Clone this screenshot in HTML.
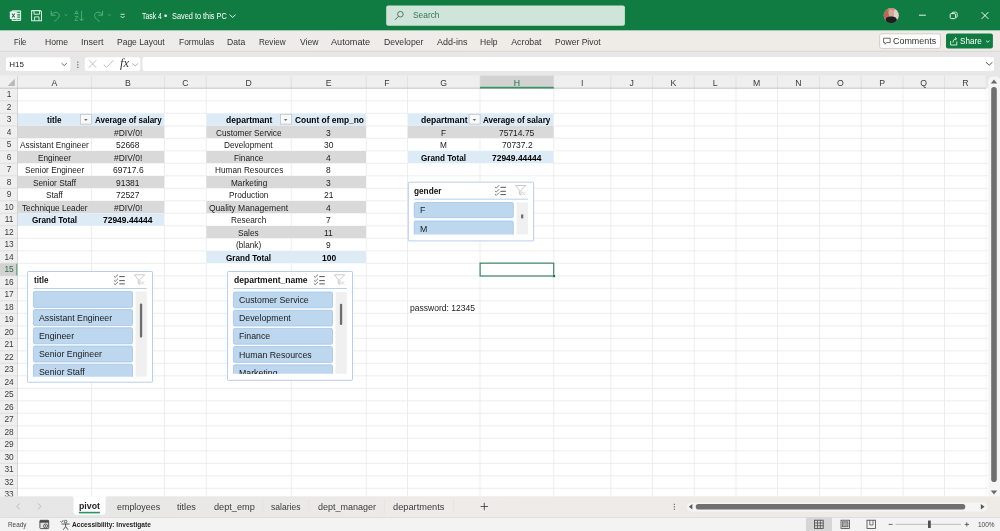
<!DOCTYPE html>
<html><head><meta charset="utf-8"><title>Excel</title><style>
html,body{margin:0;padding:0;}
body{width:1000px;height:531px;overflow:hidden;position:relative;background:#fff;font-family:"Liberation Sans", sans-serif;}
#w{position:absolute;left:0;top:0;width:1000px;height:531px;overflow:hidden;will-change:transform;}
.a{position:absolute;box-sizing:border-box;}
.t{position:absolute;white-space:nowrap;transform-origin:0 50%;}
svg{position:absolute;overflow:visible;}
</style></head>
<body>
<div id="w">
<svg class="a" style="left:0;top:0" width="1000" height="531" viewBox="0 0 1000 531" fill="none"><rect x="0.00" y="0.00" width="1000.00" height="30.60" fill="#107c41" /><defs><linearGradient id="mica1" x1="0" x2="1" y1="0" y2="0"><stop offset="0" stop-color="#ecebeb"/><stop offset="0.25" stop-color="#eeecea"/><stop offset="0.5" stop-color="#efece8"/><stop offset="1" stop-color="#efece8"/></linearGradient><linearGradient id="mica2" x1="0" x2="1" y1="0" y2="0"><stop offset="0" stop-color="#e6e6e6"/><stop offset="0.2" stop-color="#e9e8e7"/><stop offset="0.45" stop-color="#eeebe8"/><stop offset="1" stop-color="#eeeae6"/></linearGradient></defs><rect x="0.00" y="30.60" width="1000.00" height="20.60" fill="url(#mica1)" /><rect x="0.00" y="51.20" width="1000.00" height="25.00" fill="#e7e7e7" /><rect x="0.00" y="50.80" width="1000.00" height="0.90" fill="#d6d3d0" /><rect x="386.20" y="5.40" width="238.70" height="20.30" rx="2" fill="#cfe5d9" /><rect x="879.70" y="33.80" width="60.80" height="14.60" rx="2" fill="#ffffff" stroke="#c4c4c4" stroke-width="0.8" /><rect x="946.00" y="33.60" width="46.90" height="15.00" rx="2" fill="#107c41" /><rect x="6.00" y="57.20" width="64.40" height="13.80" rx="2" fill="#ffffff" /><rect x="84.80" y="57.20" width="55.40" height="13.80" rx="2" fill="#ffffff" /><rect x="142.60" y="57.00" width="851.40" height="14.00" rx="2" fill="#ffffff" /><rect x="0.00" y="75.60" width="986.30" height="12.70" fill="#efefef" /><rect x="0.00" y="75.60" width="17.50" height="420.70" fill="#efefef" /><rect x="17.50" y="88.30" width="968.80" height="408.00" fill="#ffffff" /><rect x="480.00" y="75.60" width="73.75" height="12.70" fill="#d1d2d1" /><rect x="0.00" y="263.30" width="17.50" height="12.50" fill="#d1d2d1" /><rect x="16.40" y="263.30" width="1.50" height="12.50" fill="#3c9265" /><rect x="17.50" y="113.30" width="147.00" height="12.50" fill="#ddebf7" /><rect x="17.50" y="125.80" width="147.00" height="12.50" fill="#d9d9d9" /><rect x="17.50" y="150.80" width="147.00" height="12.50" fill="#d9d9d9" /><rect x="17.50" y="175.80" width="147.00" height="12.50" fill="#d9d9d9" /><rect x="17.50" y="200.80" width="147.00" height="12.50" fill="#d9d9d9" /><rect x="17.50" y="213.30" width="147.00" height="12.50" fill="#ddebf7" /><rect x="206.25" y="113.30" width="160.00" height="12.50" fill="#ddebf7" /><rect x="206.25" y="125.80" width="160.00" height="12.50" fill="#d9d9d9" /><rect x="206.25" y="150.80" width="160.00" height="12.50" fill="#d9d9d9" /><rect x="206.25" y="175.80" width="160.00" height="12.50" fill="#d9d9d9" /><rect x="206.25" y="200.80" width="160.00" height="12.50" fill="#d9d9d9" /><rect x="206.25" y="225.80" width="160.00" height="12.50" fill="#d9d9d9" /><rect x="206.25" y="250.80" width="160.00" height="12.50" fill="#ddebf7" /><rect x="407.50" y="113.30" width="146.25" height="12.50" fill="#ddebf7" /><rect x="407.50" y="125.80" width="146.25" height="12.50" fill="#d9d9d9" /><rect x="407.50" y="150.80" width="146.25" height="12.50" fill="#ddebf7" /><line x1="17.50" y1="100.80" x2="986.30" y2="100.80" stroke="#e8e8e8" stroke-width="0.8"/><line x1="0" y1="100.80" x2="17.5" y2="100.80" stroke="#d9d9d9" stroke-width="0.7"/><line x1="164.50" y1="113.30" x2="206.25" y2="113.30" stroke="#e8e8e8" stroke-width="0.8"/><line x1="366.25" y1="113.30" x2="407.50" y2="113.30" stroke="#e8e8e8" stroke-width="0.8"/><line x1="553.75" y1="113.30" x2="986.30" y2="113.30" stroke="#e8e8e8" stroke-width="0.8"/><line x1="0" y1="113.30" x2="17.5" y2="113.30" stroke="#d9d9d9" stroke-width="0.7"/><line x1="164.50" y1="125.80" x2="206.25" y2="125.80" stroke="#e8e8e8" stroke-width="0.8"/><line x1="366.25" y1="125.80" x2="407.50" y2="125.80" stroke="#e8e8e8" stroke-width="0.8"/><line x1="553.75" y1="125.80" x2="986.30" y2="125.80" stroke="#e8e8e8" stroke-width="0.8"/><line x1="0" y1="125.80" x2="17.5" y2="125.80" stroke="#d9d9d9" stroke-width="0.7"/><line x1="164.50" y1="138.30" x2="206.25" y2="138.30" stroke="#e8e8e8" stroke-width="0.8"/><line x1="366.25" y1="138.30" x2="407.50" y2="138.30" stroke="#e8e8e8" stroke-width="0.8"/><line x1="553.75" y1="138.30" x2="986.30" y2="138.30" stroke="#e8e8e8" stroke-width="0.8"/><line x1="0" y1="138.30" x2="17.5" y2="138.30" stroke="#d9d9d9" stroke-width="0.7"/><line x1="164.50" y1="150.80" x2="206.25" y2="150.80" stroke="#e8e8e8" stroke-width="0.8"/><line x1="366.25" y1="150.80" x2="407.50" y2="150.80" stroke="#e8e8e8" stroke-width="0.8"/><line x1="553.75" y1="150.80" x2="986.30" y2="150.80" stroke="#e8e8e8" stroke-width="0.8"/><line x1="0" y1="150.80" x2="17.5" y2="150.80" stroke="#d9d9d9" stroke-width="0.7"/><line x1="164.50" y1="163.30" x2="206.25" y2="163.30" stroke="#e8e8e8" stroke-width="0.8"/><line x1="366.25" y1="163.30" x2="407.50" y2="163.30" stroke="#e8e8e8" stroke-width="0.8"/><line x1="553.75" y1="163.30" x2="986.30" y2="163.30" stroke="#e8e8e8" stroke-width="0.8"/><line x1="0" y1="163.30" x2="17.5" y2="163.30" stroke="#d9d9d9" stroke-width="0.7"/><line x1="164.50" y1="175.80" x2="206.25" y2="175.80" stroke="#e8e8e8" stroke-width="0.8"/><line x1="366.25" y1="175.80" x2="986.30" y2="175.80" stroke="#e8e8e8" stroke-width="0.8"/><line x1="0" y1="175.80" x2="17.5" y2="175.80" stroke="#d9d9d9" stroke-width="0.7"/><line x1="164.50" y1="188.30" x2="206.25" y2="188.30" stroke="#e8e8e8" stroke-width="0.8"/><line x1="366.25" y1="188.30" x2="986.30" y2="188.30" stroke="#e8e8e8" stroke-width="0.8"/><line x1="0" y1="188.30" x2="17.5" y2="188.30" stroke="#d9d9d9" stroke-width="0.7"/><line x1="164.50" y1="200.80" x2="206.25" y2="200.80" stroke="#e8e8e8" stroke-width="0.8"/><line x1="366.25" y1="200.80" x2="986.30" y2="200.80" stroke="#e8e8e8" stroke-width="0.8"/><line x1="0" y1="200.80" x2="17.5" y2="200.80" stroke="#d9d9d9" stroke-width="0.7"/><line x1="164.50" y1="213.30" x2="206.25" y2="213.30" stroke="#e8e8e8" stroke-width="0.8"/><line x1="366.25" y1="213.30" x2="986.30" y2="213.30" stroke="#e8e8e8" stroke-width="0.8"/><line x1="0" y1="213.30" x2="17.5" y2="213.30" stroke="#d9d9d9" stroke-width="0.7"/><line x1="164.50" y1="225.80" x2="206.25" y2="225.80" stroke="#e8e8e8" stroke-width="0.8"/><line x1="366.25" y1="225.80" x2="986.30" y2="225.80" stroke="#e8e8e8" stroke-width="0.8"/><line x1="0" y1="225.80" x2="17.5" y2="225.80" stroke="#d9d9d9" stroke-width="0.7"/><line x1="17.50" y1="238.30" x2="206.25" y2="238.30" stroke="#e8e8e8" stroke-width="0.8"/><line x1="366.25" y1="238.30" x2="986.30" y2="238.30" stroke="#e8e8e8" stroke-width="0.8"/><line x1="0" y1="238.30" x2="17.5" y2="238.30" stroke="#d9d9d9" stroke-width="0.7"/><line x1="17.50" y1="250.80" x2="206.25" y2="250.80" stroke="#e8e8e8" stroke-width="0.8"/><line x1="366.25" y1="250.80" x2="986.30" y2="250.80" stroke="#e8e8e8" stroke-width="0.8"/><line x1="0" y1="250.80" x2="17.5" y2="250.80" stroke="#d9d9d9" stroke-width="0.7"/><line x1="17.50" y1="263.30" x2="206.25" y2="263.30" stroke="#e8e8e8" stroke-width="0.8"/><line x1="366.25" y1="263.30" x2="986.30" y2="263.30" stroke="#e8e8e8" stroke-width="0.8"/><line x1="0" y1="263.30" x2="17.5" y2="263.30" stroke="#d9d9d9" stroke-width="0.7"/><line x1="17.50" y1="275.80" x2="986.30" y2="275.80" stroke="#e8e8e8" stroke-width="0.8"/><line x1="0" y1="275.80" x2="17.5" y2="275.80" stroke="#d9d9d9" stroke-width="0.7"/><line x1="17.50" y1="288.30" x2="986.30" y2="288.30" stroke="#e8e8e8" stroke-width="0.8"/><line x1="0" y1="288.30" x2="17.5" y2="288.30" stroke="#d9d9d9" stroke-width="0.7"/><line x1="17.50" y1="300.80" x2="986.30" y2="300.80" stroke="#e8e8e8" stroke-width="0.8"/><line x1="0" y1="300.80" x2="17.5" y2="300.80" stroke="#d9d9d9" stroke-width="0.7"/><line x1="17.50" y1="313.30" x2="986.30" y2="313.30" stroke="#e8e8e8" stroke-width="0.8"/><line x1="0" y1="313.30" x2="17.5" y2="313.30" stroke="#d9d9d9" stroke-width="0.7"/><line x1="17.50" y1="325.80" x2="986.30" y2="325.80" stroke="#e8e8e8" stroke-width="0.8"/><line x1="0" y1="325.80" x2="17.5" y2="325.80" stroke="#d9d9d9" stroke-width="0.7"/><line x1="17.50" y1="338.30" x2="986.30" y2="338.30" stroke="#e8e8e8" stroke-width="0.8"/><line x1="0" y1="338.30" x2="17.5" y2="338.30" stroke="#d9d9d9" stroke-width="0.7"/><line x1="17.50" y1="350.80" x2="986.30" y2="350.80" stroke="#e8e8e8" stroke-width="0.8"/><line x1="0" y1="350.80" x2="17.5" y2="350.80" stroke="#d9d9d9" stroke-width="0.7"/><line x1="17.50" y1="363.30" x2="986.30" y2="363.30" stroke="#e8e8e8" stroke-width="0.8"/><line x1="0" y1="363.30" x2="17.5" y2="363.30" stroke="#d9d9d9" stroke-width="0.7"/><line x1="17.50" y1="375.80" x2="986.30" y2="375.80" stroke="#e8e8e8" stroke-width="0.8"/><line x1="0" y1="375.80" x2="17.5" y2="375.80" stroke="#d9d9d9" stroke-width="0.7"/><line x1="17.50" y1="388.30" x2="986.30" y2="388.30" stroke="#e8e8e8" stroke-width="0.8"/><line x1="0" y1="388.30" x2="17.5" y2="388.30" stroke="#d9d9d9" stroke-width="0.7"/><line x1="17.50" y1="400.80" x2="986.30" y2="400.80" stroke="#e8e8e8" stroke-width="0.8"/><line x1="0" y1="400.80" x2="17.5" y2="400.80" stroke="#d9d9d9" stroke-width="0.7"/><line x1="17.50" y1="413.30" x2="986.30" y2="413.30" stroke="#e8e8e8" stroke-width="0.8"/><line x1="0" y1="413.30" x2="17.5" y2="413.30" stroke="#d9d9d9" stroke-width="0.7"/><line x1="17.50" y1="425.80" x2="986.30" y2="425.80" stroke="#e8e8e8" stroke-width="0.8"/><line x1="0" y1="425.80" x2="17.5" y2="425.80" stroke="#d9d9d9" stroke-width="0.7"/><line x1="17.50" y1="438.30" x2="986.30" y2="438.30" stroke="#e8e8e8" stroke-width="0.8"/><line x1="0" y1="438.30" x2="17.5" y2="438.30" stroke="#d9d9d9" stroke-width="0.7"/><line x1="17.50" y1="450.80" x2="986.30" y2="450.80" stroke="#e8e8e8" stroke-width="0.8"/><line x1="0" y1="450.80" x2="17.5" y2="450.80" stroke="#d9d9d9" stroke-width="0.7"/><line x1="17.50" y1="463.30" x2="986.30" y2="463.30" stroke="#e8e8e8" stroke-width="0.8"/><line x1="0" y1="463.30" x2="17.5" y2="463.30" stroke="#d9d9d9" stroke-width="0.7"/><line x1="17.50" y1="475.80" x2="986.30" y2="475.80" stroke="#e8e8e8" stroke-width="0.8"/><line x1="0" y1="475.80" x2="17.5" y2="475.80" stroke="#d9d9d9" stroke-width="0.7"/><line x1="17.50" y1="488.30" x2="986.30" y2="488.30" stroke="#e8e8e8" stroke-width="0.8"/><line x1="0" y1="488.30" x2="17.5" y2="488.30" stroke="#d9d9d9" stroke-width="0.7"/><line x1="91.50" y1="88.30" x2="91.50" y2="113.30" stroke="#e8e8e8" stroke-width="0.8"/><line x1="91.50" y1="138.30" x2="91.50" y2="150.80" stroke="#e8e8e8" stroke-width="0.8"/><line x1="91.50" y1="163.30" x2="91.50" y2="175.80" stroke="#e8e8e8" stroke-width="0.8"/><line x1="91.50" y1="188.30" x2="91.50" y2="200.80" stroke="#e8e8e8" stroke-width="0.8"/><line x1="91.50" y1="225.80" x2="91.50" y2="496.30" stroke="#e8e8e8" stroke-width="0.8"/><line x1="91.50" y1="76.5" x2="91.50" y2="88.3" stroke="#dcdcdc" stroke-width="0.8"/><line x1="164.50" y1="88.30" x2="164.50" y2="113.30" stroke="#e8e8e8" stroke-width="0.8"/><line x1="164.50" y1="138.30" x2="164.50" y2="150.80" stroke="#e8e8e8" stroke-width="0.8"/><line x1="164.50" y1="163.30" x2="164.50" y2="175.80" stroke="#e8e8e8" stroke-width="0.8"/><line x1="164.50" y1="188.30" x2="164.50" y2="200.80" stroke="#e8e8e8" stroke-width="0.8"/><line x1="164.50" y1="225.80" x2="164.50" y2="496.30" stroke="#e8e8e8" stroke-width="0.8"/><line x1="164.50" y1="76.5" x2="164.50" y2="88.3" stroke="#dcdcdc" stroke-width="0.8"/><line x1="206.25" y1="88.30" x2="206.25" y2="113.30" stroke="#e8e8e8" stroke-width="0.8"/><line x1="206.25" y1="138.30" x2="206.25" y2="150.80" stroke="#e8e8e8" stroke-width="0.8"/><line x1="206.25" y1="163.30" x2="206.25" y2="175.80" stroke="#e8e8e8" stroke-width="0.8"/><line x1="206.25" y1="188.30" x2="206.25" y2="200.80" stroke="#e8e8e8" stroke-width="0.8"/><line x1="206.25" y1="213.30" x2="206.25" y2="225.80" stroke="#e8e8e8" stroke-width="0.8"/><line x1="206.25" y1="238.30" x2="206.25" y2="250.80" stroke="#e8e8e8" stroke-width="0.8"/><line x1="206.25" y1="263.30" x2="206.25" y2="496.30" stroke="#e8e8e8" stroke-width="0.8"/><line x1="206.25" y1="76.5" x2="206.25" y2="88.3" stroke="#dcdcdc" stroke-width="0.8"/><line x1="291.25" y1="88.30" x2="291.25" y2="113.30" stroke="#e8e8e8" stroke-width="0.8"/><line x1="291.25" y1="138.30" x2="291.25" y2="150.80" stroke="#e8e8e8" stroke-width="0.8"/><line x1="291.25" y1="163.30" x2="291.25" y2="175.80" stroke="#e8e8e8" stroke-width="0.8"/><line x1="291.25" y1="188.30" x2="291.25" y2="200.80" stroke="#e8e8e8" stroke-width="0.8"/><line x1="291.25" y1="213.30" x2="291.25" y2="225.80" stroke="#e8e8e8" stroke-width="0.8"/><line x1="291.25" y1="238.30" x2="291.25" y2="250.80" stroke="#e8e8e8" stroke-width="0.8"/><line x1="291.25" y1="263.30" x2="291.25" y2="496.30" stroke="#e8e8e8" stroke-width="0.8"/><line x1="291.25" y1="76.5" x2="291.25" y2="88.3" stroke="#dcdcdc" stroke-width="0.8"/><line x1="366.25" y1="88.30" x2="366.25" y2="113.30" stroke="#e8e8e8" stroke-width="0.8"/><line x1="366.25" y1="138.30" x2="366.25" y2="150.80" stroke="#e8e8e8" stroke-width="0.8"/><line x1="366.25" y1="163.30" x2="366.25" y2="175.80" stroke="#e8e8e8" stroke-width="0.8"/><line x1="366.25" y1="188.30" x2="366.25" y2="200.80" stroke="#e8e8e8" stroke-width="0.8"/><line x1="366.25" y1="213.30" x2="366.25" y2="225.80" stroke="#e8e8e8" stroke-width="0.8"/><line x1="366.25" y1="238.30" x2="366.25" y2="250.80" stroke="#e8e8e8" stroke-width="0.8"/><line x1="366.25" y1="263.30" x2="366.25" y2="496.30" stroke="#e8e8e8" stroke-width="0.8"/><line x1="366.25" y1="76.5" x2="366.25" y2="88.3" stroke="#dcdcdc" stroke-width="0.8"/><line x1="407.50" y1="88.30" x2="407.50" y2="113.30" stroke="#e8e8e8" stroke-width="0.8"/><line x1="407.50" y1="138.30" x2="407.50" y2="150.80" stroke="#e8e8e8" stroke-width="0.8"/><line x1="407.50" y1="163.30" x2="407.50" y2="496.30" stroke="#e8e8e8" stroke-width="0.8"/><line x1="407.50" y1="76.5" x2="407.50" y2="88.3" stroke="#dcdcdc" stroke-width="0.8"/><line x1="480.00" y1="88.30" x2="480.00" y2="113.30" stroke="#e8e8e8" stroke-width="0.8"/><line x1="480.00" y1="138.30" x2="480.00" y2="150.80" stroke="#e8e8e8" stroke-width="0.8"/><line x1="480.00" y1="163.30" x2="480.00" y2="496.30" stroke="#e8e8e8" stroke-width="0.8"/><line x1="480.00" y1="76.5" x2="480.00" y2="88.3" stroke="#dcdcdc" stroke-width="0.8"/><line x1="553.75" y1="88.30" x2="553.75" y2="113.30" stroke="#e8e8e8" stroke-width="0.8"/><line x1="553.75" y1="138.30" x2="553.75" y2="150.80" stroke="#e8e8e8" stroke-width="0.8"/><line x1="553.75" y1="163.30" x2="553.75" y2="496.30" stroke="#e8e8e8" stroke-width="0.8"/><line x1="553.75" y1="76.5" x2="553.75" y2="88.3" stroke="#dcdcdc" stroke-width="0.8"/><line x1="610.80" y1="88.30" x2="610.80" y2="496.30" stroke="#e8e8e8" stroke-width="0.8"/><line x1="610.80" y1="76.5" x2="610.80" y2="88.3" stroke="#dcdcdc" stroke-width="0.8"/><line x1="652.50" y1="88.30" x2="652.50" y2="496.30" stroke="#e8e8e8" stroke-width="0.8"/><line x1="652.50" y1="76.5" x2="652.50" y2="88.3" stroke="#dcdcdc" stroke-width="0.8"/><line x1="694.25" y1="88.30" x2="694.25" y2="496.30" stroke="#e8e8e8" stroke-width="0.8"/><line x1="694.25" y1="76.5" x2="694.25" y2="88.3" stroke="#dcdcdc" stroke-width="0.8"/><line x1="736.00" y1="88.30" x2="736.00" y2="496.30" stroke="#e8e8e8" stroke-width="0.8"/><line x1="736.00" y1="76.5" x2="736.00" y2="88.3" stroke="#dcdcdc" stroke-width="0.8"/><line x1="777.50" y1="88.30" x2="777.50" y2="496.30" stroke="#e8e8e8" stroke-width="0.8"/><line x1="777.50" y1="76.5" x2="777.50" y2="88.3" stroke="#dcdcdc" stroke-width="0.8"/><line x1="819.50" y1="88.30" x2="819.50" y2="496.30" stroke="#e8e8e8" stroke-width="0.8"/><line x1="819.50" y1="76.5" x2="819.50" y2="88.3" stroke="#dcdcdc" stroke-width="0.8"/><line x1="861.25" y1="88.30" x2="861.25" y2="496.30" stroke="#e8e8e8" stroke-width="0.8"/><line x1="861.25" y1="76.5" x2="861.25" y2="88.3" stroke="#dcdcdc" stroke-width="0.8"/><line x1="903.00" y1="88.30" x2="903.00" y2="496.30" stroke="#e8e8e8" stroke-width="0.8"/><line x1="903.00" y1="76.5" x2="903.00" y2="88.3" stroke="#dcdcdc" stroke-width="0.8"/><line x1="944.50" y1="88.30" x2="944.50" y2="496.30" stroke="#e8e8e8" stroke-width="0.8"/><line x1="944.50" y1="76.5" x2="944.50" y2="88.3" stroke="#dcdcdc" stroke-width="0.8"/><line x1="986.25" y1="88.30" x2="986.25" y2="496.30" stroke="#e8e8e8" stroke-width="0.8"/><line x1="986.25" y1="76.5" x2="986.25" y2="88.3" stroke="#dcdcdc" stroke-width="0.8"/><line x1="17.5" y1="76" x2="17.5" y2="496.3" stroke="#cdcdcd" stroke-width="0.8"/><line x1="0" y1="88.2" x2="986.3" y2="88.2" stroke="#bfbfbf" stroke-width="0.9"/><path d="M14.8 78.8 L14.8 86 L7.6 86 Z" fill="#b8b8b8"/><rect x="480.00" y="86.80" width="73.75" height="1.70" fill="#3c9265" /></svg>
<span class="t" style="left:6.69px;top:90.27px;line-height:9.96px;font-size:8.3px;font-weight:400;color:#3a3a3a;">1</span>
<span class="t" style="left:6.69px;top:102.77px;line-height:9.96px;font-size:8.3px;font-weight:400;color:#3a3a3a;">2</span>
<span class="t" style="left:6.69px;top:115.27px;line-height:9.96px;font-size:8.3px;font-weight:400;color:#3a3a3a;">3</span>
<span class="t" style="left:6.69px;top:127.77px;line-height:9.96px;font-size:8.3px;font-weight:400;color:#3a3a3a;">4</span>
<span class="t" style="left:6.69px;top:140.27px;line-height:9.96px;font-size:8.3px;font-weight:400;color:#3a3a3a;">5</span>
<span class="t" style="left:6.69px;top:152.77px;line-height:9.96px;font-size:8.3px;font-weight:400;color:#3a3a3a;">6</span>
<span class="t" style="left:6.69px;top:165.27px;line-height:9.96px;font-size:8.3px;font-weight:400;color:#3a3a3a;">7</span>
<span class="t" style="left:6.69px;top:177.77px;line-height:9.96px;font-size:8.3px;font-weight:400;color:#3a3a3a;">8</span>
<span class="t" style="left:6.69px;top:190.27px;line-height:9.96px;font-size:8.3px;font-weight:400;color:#3a3a3a;">9</span>
<span class="t" style="left:4.38px;top:202.77px;line-height:9.96px;font-size:8.3px;font-weight:400;color:#3a3a3a;">10</span>
<span class="t" style="left:4.69px;top:215.27px;line-height:9.96px;font-size:8.3px;font-weight:400;color:#3a3a3a;">11</span>
<span class="t" style="left:4.38px;top:227.77px;line-height:9.96px;font-size:8.3px;font-weight:400;color:#3a3a3a;">12</span>
<span class="t" style="left:4.38px;top:240.27px;line-height:9.96px;font-size:8.3px;font-weight:400;color:#3a3a3a;">13</span>
<span class="t" style="left:4.38px;top:252.77px;line-height:9.96px;font-size:8.3px;font-weight:400;color:#3a3a3a;">14</span>
<span class="t" style="left:4.38px;top:265.27px;line-height:9.96px;font-size:8.3px;font-weight:400;color:#2c6e4b;">15</span>
<span class="t" style="left:4.38px;top:277.77px;line-height:9.96px;font-size:8.3px;font-weight:400;color:#3a3a3a;">16</span>
<span class="t" style="left:4.38px;top:290.27px;line-height:9.96px;font-size:8.3px;font-weight:400;color:#3a3a3a;">17</span>
<span class="t" style="left:4.38px;top:302.77px;line-height:9.96px;font-size:8.3px;font-weight:400;color:#3a3a3a;">18</span>
<span class="t" style="left:4.38px;top:315.27px;line-height:9.96px;font-size:8.3px;font-weight:400;color:#3a3a3a;">19</span>
<span class="t" style="left:4.38px;top:327.77px;line-height:9.96px;font-size:8.3px;font-weight:400;color:#3a3a3a;">20</span>
<span class="t" style="left:4.38px;top:340.27px;line-height:9.96px;font-size:8.3px;font-weight:400;color:#3a3a3a;">21</span>
<span class="t" style="left:4.38px;top:352.77px;line-height:9.96px;font-size:8.3px;font-weight:400;color:#3a3a3a;">22</span>
<span class="t" style="left:4.38px;top:365.27px;line-height:9.96px;font-size:8.3px;font-weight:400;color:#3a3a3a;">23</span>
<span class="t" style="left:4.38px;top:377.77px;line-height:9.96px;font-size:8.3px;font-weight:400;color:#3a3a3a;">24</span>
<span class="t" style="left:4.38px;top:390.27px;line-height:9.96px;font-size:8.3px;font-weight:400;color:#3a3a3a;">25</span>
<span class="t" style="left:4.38px;top:402.77px;line-height:9.96px;font-size:8.3px;font-weight:400;color:#3a3a3a;">26</span>
<span class="t" style="left:4.38px;top:415.27px;line-height:9.96px;font-size:8.3px;font-weight:400;color:#3a3a3a;">27</span>
<span class="t" style="left:4.38px;top:427.77px;line-height:9.96px;font-size:8.3px;font-weight:400;color:#3a3a3a;">28</span>
<span class="t" style="left:4.38px;top:440.27px;line-height:9.96px;font-size:8.3px;font-weight:400;color:#3a3a3a;">29</span>
<span class="t" style="left:4.38px;top:452.77px;line-height:9.96px;font-size:8.3px;font-weight:400;color:#3a3a3a;">30</span>
<span class="t" style="left:4.38px;top:465.27px;line-height:9.96px;font-size:8.3px;font-weight:400;color:#3a3a3a;">31</span>
<span class="t" style="left:4.38px;top:477.77px;line-height:9.96px;font-size:8.3px;font-weight:400;color:#3a3a3a;">32</span>
<span class="t" style="left:4.38px;top:490.27px;line-height:9.96px;font-size:8.3px;font-weight:400;color:#3a3a3a;">33</span>
<svg class="a" style="left:0;top:0" width="1000" height="531" viewBox="0 0 1000 531" fill="none"><rect x="80.60" y="114.30" width="11.00" height="9.80" fill="#f7f9fb" stroke="#bcbfc2" stroke-width="0.7" /><path d="M84.20 119.00h3.4l-1.7 2z" fill="#666"/><rect x="280.35" y="114.30" width="11.00" height="9.80" fill="#f7f9fb" stroke="#bcbfc2" stroke-width="0.7" /><path d="M283.95 119.00h3.4l-1.7 2z" fill="#666"/><rect x="469.10" y="114.30" width="11.00" height="9.80" fill="#f7f9fb" stroke="#bcbfc2" stroke-width="0.7" /><path d="M472.70 119.00h3.4l-1.7 2z" fill="#666"/><rect x="480.10" y="263.15" width="73.60" height="12.85" fill="none" stroke="#3a7f5e" stroke-width="1.15" /><rect x="552.40" y="274.50" width="2.80" height="2.80" fill="#1f6f49" stroke="#ffffff" stroke-width="0.4" /><rect x="11.6" y="10.2" width="9.5" height="10.8" rx="1.1" fill="#dcf0e4"/><rect x="17.3" y="11.7" width="2.7" height="1.3" fill="#107c41" opacity="0.85"/><rect x="17.3" y="14.1" width="2.7" height="1.5" fill="#107c41" opacity="0.85"/><rect x="17.3" y="16.5" width="2.7" height="1.3" fill="#107c41" opacity="0.85"/><rect x="17.3" y="19" width="2.7" height="0.8" fill="#107c41" opacity="0.85"/><rect x="12.9" y="19" width="3.6" height="0.8" fill="#107c41" opacity="0.85"/><rect x="13.2" y="11.7" width="3.3" height="0.6" fill="#107c41" opacity="0.85"/><rect x="9.8" y="11.4" width="6.3" height="7.7" rx="0.8" fill="#f6fbf8"/><path d="M11.9 13.5L14.9 17.5M14.9 13.5L11.9 17.5" stroke="#1b6e40" stroke-width="1.05"/><path d="M31.6 10.6H40.4L41.5 11.7V20.7H31.6Z" stroke="#d6f0e0" stroke-width="1.05" stroke-linejoin="round"/><path d="M34 10.6V14.2H39.6V10.6M34.6 20.7V16.9H39V20.7" stroke="#d6f0e0" stroke-width="1"/><path d="M51.2 11.2V15.2H55.2M51.4 15C53 12.2 56.5 11.4 58.4 13.4C60.4 15.6 59 18.4 54.6 21.2" stroke="#58b085" stroke-width="0.95" stroke-linecap="round"/><path d="M64.4 14.2L66 15.6L67.6 14.2" stroke="#58b085" stroke-width="0.7"/><path d="M74.6 14.6L76.4 10.8L78.2 14.6M75.2 13.5H77.6M74.9 16.4H78L74.9 20.4H78.2" stroke="#58b085" stroke-width="0.8" stroke-linejoin="round"/><path d="M81.6 10.8V20.6M79.6 18.6L81.6 20.8L83.6 18.6" stroke="#58b085" stroke-width="0.9"/><path d="M102.6 11.2V15.2H98.6M102.4 15C100.8 12.2 97.3 11.4 95.4 13.4C93.4 15.6 94.8 18.4 99.2 21.2" stroke="#58b085" stroke-width="0.95" stroke-linecap="round"/><path d="M107.8 14.2L109.4 15.6L111 14.2" stroke="#58b085" stroke-width="0.7"/><path d="M120.6 14.3H124.6" stroke="#ffffff" stroke-width="0.8"/><path d="M120.6 16L122.6 18L124.6 16" stroke="#ffffff" stroke-width="0.8"/><path d="M229.6 14.6L232.6 17.4L235.6 14.6" stroke="#ffffff" stroke-width="0.9"/><circle cx="400.4" cy="14.2" r="2.8" stroke="#3f6550" stroke-width="0.85"/><path d="M398.4 16.4L395 19.8" stroke="#3f6550" stroke-width="0.95"/><clipPath id="av"><circle cx="891.2" cy="15.6" r="7.5"/></clipPath><g clip-path="url(#av)"><rect x="883" y="7" width="17" height="17" fill="#c8a79b"/><rect x="883" y="7" width="6" height="12" fill="#b26a5c"/><rect x="894" y="7" width="6" height="12" fill="#ddd2cf"/><rect x="887.6" y="7.6" width="7" height="3" fill="#c58d78"/><ellipse cx="891.2" cy="12.8" rx="2.8" ry="3.3" fill="#d6ab93"/><path d="M885.6 24V20C885.6 17.4 888 16.4 891.2 16.4C894.4 16.4 896.8 17.4 896.8 20V24Z" fill="#1c1e1f"/></g><path d="M919 15.2H925.8" stroke="#ffffff" stroke-width="0.9"/><rect x="950.2" y="13.6" width="5.4" height="5" rx="1.2" stroke="#ffffff" stroke-width="0.9"/><path d="M951.8 13.4C951.8 12.6 952.4 12.2 953 12.2H955.6C956.6 12.2 957.2 12.8 957.2 13.8V16.4C957.2 17 956.8 17.4 956 17.4" stroke="#ffffff" stroke-width="0.8"/><path d="M981.6 12.1L988.4 18.9M988.4 12.1L981.6 18.9" stroke="#ffffff" stroke-width="0.95"/><path d="M883.6 38.2H890.2V42.6H886.6L885 44.2V42.6H883.6Z" stroke="#444" stroke-width="0.8" stroke-linejoin="round"/><path d="M950.6 41V45H956.8V41.4M953 42.6C953 40 954.4 38.8 956.2 38.8M955 37.4L956.6 38.8L955 40.2" stroke="#ffffff" stroke-width="0.8" stroke-linejoin="round"/><path d="M986 40.6L987.8 42.2L989.6 40.6" stroke="#ffffff" stroke-width="0.8"/><path d="M61.6 63.2L64.2 65.6L66.8 63.2" stroke="#444" stroke-width="0.8"/><rect x="77.2" y="61.6" width="1.2" height="1.2" fill="#666"/><rect x="77.2" y="64.2" width="1.2" height="1.2" fill="#666"/><rect x="77.2" y="66.8" width="1.2" height="1.2" fill="#666"/><path d="M88.9 60.3L96.2 67.6M96.2 60.3L88.9 67.6" stroke="#b0b0b0" stroke-width="0.8"/><path d="M103.8 64.8L106.6 67.4L113.6 60.2" stroke="#b0b0b0" stroke-width="0.8"/><path d="M132.2 63.4L135.2 66L138.2 63.4" stroke="#a0a0a0" stroke-width="0.8"/><path d="M986 62.2L989.2 65.2L992.4 62.2" stroke="#444" stroke-width="0.9"/><rect x="27.50" y="271.50" width="125.00" height="110.70" rx="0.8" fill="#ffffff" stroke="#b0cae6" stroke-width="0.9" /><rect x="33.40" y="288.00" width="113.50" height="0.90" fill="#b0cae6" /><rect x="33.40" y="291.40" width="99.10" height="16.00" rx="1.5" fill="#bdd7ee" stroke="#9dbfe2" stroke-width="0.7" /><rect x="33.40" y="309.60" width="99.10" height="16.00" rx="1.5" fill="#bdd7ee" stroke="#9dbfe2" stroke-width="0.7" /></svg>
<div class="a" style="left:39.20px;top:309.60px;width:93.10px;height:16.00px;overflow:hidden;"><span class="t" style="left:0;top:3.14px;font-size:9.1px;line-height:10.92px;color:#1a1a1a;transform:scaleX(0.965);">Assistant Engineer</span></div>
<svg class="a" style="left:0;top:0" width="1000" height="531" viewBox="0 0 1000 531" fill="none"><rect x="33.40" y="327.80" width="99.10" height="16.00" rx="1.5" fill="#bdd7ee" stroke="#9dbfe2" stroke-width="0.7" /></svg>
<div class="a" style="left:39.20px;top:327.80px;width:93.10px;height:16.00px;overflow:hidden;"><span class="t" style="left:0;top:3.14px;font-size:9.1px;line-height:10.92px;color:#1a1a1a;transform:scaleX(0.965);">Engineer</span></div>
<svg class="a" style="left:0;top:0" width="1000" height="531" viewBox="0 0 1000 531" fill="none"><rect x="33.40" y="346.00" width="99.10" height="16.00" rx="1.5" fill="#bdd7ee" stroke="#9dbfe2" stroke-width="0.7" /></svg>
<div class="a" style="left:39.20px;top:346.00px;width:93.10px;height:16.00px;overflow:hidden;"><span class="t" style="left:0;top:3.14px;font-size:9.1px;line-height:10.92px;color:#1a1a1a;transform:scaleX(0.965);">Senior Engineer</span></div>
<svg class="a" style="left:0;top:0" width="1000" height="531" viewBox="0 0 1000 531" fill="none"><path d="M33.40 376.80V365.70Q33.40 364.20 34.90 364.20H131.00Q132.50 364.20 132.50 365.70V376.80" fill="#bdd7ee" stroke="#9dbfe2" stroke-width="0.7"/></svg>
<div class="a" style="left:39.20px;top:364.20px;width:93.10px;height:12.60px;overflow:hidden;"><span class="t" style="left:0;top:3.14px;font-size:9.1px;line-height:10.92px;color:#1a1a1a;transform:scaleX(0.965);">Senior Staff</span></div>
<svg class="a" style="left:0;top:0" width="1000" height="531" viewBox="0 0 1000 531" fill="none"><rect x="135.50" y="291.40" width="11.30" height="85.40" fill="#f0f0f0" /><rect x="139.90" y="303.50" width="2.30" height="34.00" rx="1" fill="#6e6e6e" /><path d="M113.90 276.20L115.20 277.40L118.10 274.50" stroke="#444" stroke-width="0.7"/><path d="M119.30 276.60H124.80" stroke="#444" stroke-width="0.9"/><path d="M113.90 280.20L115.20 281.40L118.10 278.50" stroke="#444" stroke-width="0.7"/><path d="M119.30 280.60H124.80" stroke="#444" stroke-width="0.9"/><path d="M113.90 283.50L115.20 284.70L118.10 281.80" stroke="#444" stroke-width="0.7"/><path d="M119.30 283.90H124.80" stroke="#444" stroke-width="0.9"/><path d="M134.30 274.80H144.70L139.90 279.60V284.40L138.30 283.40V279.60Z" stroke="#bcbcbc" stroke-width="0.8" stroke-linejoin="round"/><path d="M140.90 281.20L144.30 284.60M144.30 281.20L140.90 284.60" stroke="#c8c8c8" stroke-width="0.7"/><rect x="227.50" y="271.50" width="125.00" height="108.80" rx="0.8" fill="#ffffff" stroke="#b0cae6" stroke-width="0.9" /><rect x="233.40" y="288.00" width="113.50" height="0.90" fill="#b0cae6" /><rect x="233.40" y="292.00" width="99.10" height="15.80" rx="1.5" fill="#bdd7ee" stroke="#9dbfe2" stroke-width="0.7" /></svg>
<div class="a" style="left:239.20px;top:292.00px;width:93.10px;height:15.80px;overflow:hidden;"><span class="t" style="left:0;top:3.04px;font-size:9.1px;line-height:10.92px;color:#1a1a1a;transform:scaleX(0.965);">Customer Service</span></div>
<svg class="a" style="left:0;top:0" width="1000" height="531" viewBox="0 0 1000 531" fill="none"><rect x="233.40" y="310.20" width="99.10" height="15.80" rx="1.5" fill="#bdd7ee" stroke="#9dbfe2" stroke-width="0.7" /></svg>
<div class="a" style="left:239.20px;top:310.20px;width:93.10px;height:15.80px;overflow:hidden;"><span class="t" style="left:0;top:3.04px;font-size:9.1px;line-height:10.92px;color:#1a1a1a;transform:scaleX(0.965);">Development</span></div>
<svg class="a" style="left:0;top:0" width="1000" height="531" viewBox="0 0 1000 531" fill="none"><rect x="233.40" y="328.40" width="99.10" height="15.80" rx="1.5" fill="#bdd7ee" stroke="#9dbfe2" stroke-width="0.7" /></svg>
<div class="a" style="left:239.20px;top:328.40px;width:93.10px;height:15.80px;overflow:hidden;"><span class="t" style="left:0;top:3.04px;font-size:9.1px;line-height:10.92px;color:#1a1a1a;transform:scaleX(0.965);">Finance</span></div>
<svg class="a" style="left:0;top:0" width="1000" height="531" viewBox="0 0 1000 531" fill="none"><rect x="233.40" y="346.60" width="99.10" height="15.80" rx="1.5" fill="#bdd7ee" stroke="#9dbfe2" stroke-width="0.7" /></svg>
<div class="a" style="left:239.20px;top:346.60px;width:93.10px;height:15.80px;overflow:hidden;"><span class="t" style="left:0;top:3.04px;font-size:9.1px;line-height:10.92px;color:#1a1a1a;transform:scaleX(0.965);">Human Resources</span></div>
<svg class="a" style="left:0;top:0" width="1000" height="531" viewBox="0 0 1000 531" fill="none"><path d="M233.40 373.70V366.30Q233.40 364.80 234.90 364.80H331.00Q332.50 364.80 332.50 366.30V373.70" fill="#bdd7ee" stroke="#9dbfe2" stroke-width="0.7"/></svg>
<div class="a" style="left:239.20px;top:364.80px;width:93.10px;height:8.90px;overflow:hidden;"><span class="t" style="left:0;top:3.04px;font-size:9.1px;line-height:10.92px;color:#1a1a1a;transform:scaleX(0.965);">Marketing</span></div>
<svg class="a" style="left:0;top:0" width="1000" height="531" viewBox="0 0 1000 531" fill="none"><rect x="335.50" y="292.00" width="11.30" height="81.70" fill="#f0f0f0" /><rect x="339.90" y="303.80" width="2.30" height="21.20" rx="1" fill="#6e6e6e" /><path d="M313.90 276.20L315.20 277.40L318.10 274.50" stroke="#444" stroke-width="0.7"/><path d="M319.30 276.60H324.80" stroke="#444" stroke-width="0.9"/><path d="M313.90 280.20L315.20 281.40L318.10 278.50" stroke="#444" stroke-width="0.7"/><path d="M319.30 280.60H324.80" stroke="#444" stroke-width="0.9"/><path d="M313.90 283.50L315.20 284.70L318.10 281.80" stroke="#444" stroke-width="0.7"/><path d="M319.30 283.90H324.80" stroke="#444" stroke-width="0.9"/><path d="M334.30 274.80H344.70L339.90 279.60V284.40L338.30 283.40V279.60Z" stroke="#bcbcbc" stroke-width="0.8" stroke-linejoin="round"/><path d="M340.90 281.20L344.30 284.60M344.30 281.20L340.90 284.60" stroke="#c8c8c8" stroke-width="0.7"/><rect x="408.30" y="182.20" width="125.30" height="58.70" rx="0.8" fill="#ffffff" stroke="#b0cae6" stroke-width="0.9" /><rect x="414.20" y="198.70" width="113.80" height="0.90" fill="#b0cae6" /><rect x="414.20" y="202.50" width="99.10" height="15.20" rx="1.5" fill="#bdd7ee" stroke="#9dbfe2" stroke-width="0.7" /></svg>
<div class="a" style="left:420.00px;top:202.50px;width:93.10px;height:15.20px;overflow:hidden;"><span class="t" style="left:0;top:2.74px;font-size:9.1px;line-height:10.92px;color:#1a1a1a;transform:scaleX(0.965);">F</span></div>
<svg class="a" style="left:0;top:0" width="1000" height="531" viewBox="0 0 1000 531" fill="none"><path d="M414.20 234.50V222.40Q414.20 220.90 415.70 220.90H511.80Q513.30 220.90 513.30 222.40V234.50" fill="#bdd7ee" stroke="#9dbfe2" stroke-width="0.7"/></svg>
<div class="a" style="left:420.00px;top:220.90px;width:93.10px;height:13.60px;overflow:hidden;"><span class="t" style="left:0;top:2.74px;font-size:9.1px;line-height:10.92px;color:#1a1a1a;transform:scaleX(0.965);">M</span></div>
<svg class="a" style="left:0;top:0" width="1000" height="531" viewBox="0 0 1000 531" fill="none"><rect x="516.60" y="202.50" width="11.30" height="32.00" fill="#f0f0f0" /><rect x="521.00" y="214.20" width="2.30" height="4.30" rx="1" fill="#6e6e6e" /><path d="M495.00 186.90L496.30 188.10L499.20 185.20" stroke="#444" stroke-width="0.7"/><path d="M500.40 187.30H505.90" stroke="#444" stroke-width="0.9"/><path d="M495.00 190.90L496.30 192.10L499.20 189.20" stroke="#444" stroke-width="0.7"/><path d="M500.40 191.30H505.90" stroke="#444" stroke-width="0.9"/><path d="M495.00 194.20L496.30 195.40L499.20 192.50" stroke="#444" stroke-width="0.7"/><path d="M500.40 194.60H505.90" stroke="#444" stroke-width="0.9"/><path d="M515.40 185.50H525.80L521.00 190.30V195.10L519.40 194.10V190.30Z" stroke="#bcbcbc" stroke-width="0.8" stroke-linejoin="round"/><path d="M522.00 191.90L525.40 195.30M525.40 191.90L522.00 195.30" stroke="#c8c8c8" stroke-width="0.7"/><rect x="986.30" y="75.60" width="13.70" height="12.70" fill="#e7e7e7" /><rect x="986.30" y="88.30" width="13.70" height="408.00" fill="#ffffff" /><rect x="986.30" y="100.40" width="1.90" height="0.80" fill="#e8e8e8" /><rect x="986.30" y="112.90" width="1.90" height="0.80" fill="#e8e8e8" /><rect x="986.30" y="125.40" width="1.90" height="0.80" fill="#e8e8e8" /><rect x="986.30" y="137.90" width="1.90" height="0.80" fill="#e8e8e8" /><rect x="986.30" y="150.40" width="1.90" height="0.80" fill="#e8e8e8" /><rect x="986.30" y="162.90" width="1.90" height="0.80" fill="#e8e8e8" /><rect x="986.30" y="175.40" width="1.90" height="0.80" fill="#e8e8e8" /><rect x="986.30" y="187.90" width="1.90" height="0.80" fill="#e8e8e8" /><rect x="986.30" y="200.40" width="1.90" height="0.80" fill="#e8e8e8" /><rect x="986.30" y="212.90" width="1.90" height="0.80" fill="#e8e8e8" /><rect x="986.30" y="225.40" width="1.90" height="0.80" fill="#e8e8e8" /><rect x="986.30" y="237.90" width="1.90" height="0.80" fill="#e8e8e8" /><rect x="986.30" y="250.40" width="1.90" height="0.80" fill="#e8e8e8" /><rect x="986.30" y="262.90" width="1.90" height="0.80" fill="#e8e8e8" /><rect x="986.30" y="275.40" width="1.90" height="0.80" fill="#e8e8e8" /><rect x="986.30" y="287.90" width="1.90" height="0.80" fill="#e8e8e8" /><rect x="986.30" y="300.40" width="1.90" height="0.80" fill="#e8e8e8" /><rect x="986.30" y="312.90" width="1.90" height="0.80" fill="#e8e8e8" /><rect x="986.30" y="325.40" width="1.90" height="0.80" fill="#e8e8e8" /><rect x="986.30" y="337.90" width="1.90" height="0.80" fill="#e8e8e8" /><rect x="986.30" y="350.40" width="1.90" height="0.80" fill="#e8e8e8" /><rect x="986.30" y="362.90" width="1.90" height="0.80" fill="#e8e8e8" /><rect x="986.30" y="375.40" width="1.90" height="0.80" fill="#e8e8e8" /><rect x="986.30" y="387.90" width="1.90" height="0.80" fill="#e8e8e8" /><rect x="986.30" y="400.40" width="1.90" height="0.80" fill="#e8e8e8" /><rect x="986.30" y="412.90" width="1.90" height="0.80" fill="#e8e8e8" /><rect x="986.30" y="425.40" width="1.90" height="0.80" fill="#e8e8e8" /><rect x="986.30" y="437.90" width="1.90" height="0.80" fill="#e8e8e8" /><rect x="986.30" y="450.40" width="1.90" height="0.80" fill="#e8e8e8" /><rect x="986.30" y="462.90" width="1.90" height="0.80" fill="#e8e8e8" /><rect x="986.30" y="475.40" width="1.90" height="0.80" fill="#e8e8e8" /><rect x="986.30" y="487.90" width="1.90" height="0.80" fill="#e8e8e8" /><rect x="988.20" y="76.40" width="12.40" height="421.00" rx="5" fill="#f5f5f5" /><rect x="991.20" y="87.00" width="5.60" height="395.00" rx="2.8" fill="#6f6f6f" /><rect x="0.00" y="496.30" width="1000.00" height="21.00" fill="url(#mica2)" /><rect x="0.00" y="517.40" width="1000.00" height="14.00" fill="#f3f3f3" /><rect x="0.00" y="517.00" width="1000.00" height="0.80" fill="#d9d9d9" /><path d="M71.4 496.3Q73.6 496.3 73.6 498.6V512.4Q73.6 514.8 76 514.8H103.1Q105.5 514.8 105.5 512.4V498.6Q105.5 496.3 107.7 496.3Z" fill="#ffffff"/><rect x="78.90" y="511.80" width="21.00" height="1.60" fill="#2f9162" /><rect x="262.50" y="499.50" width="0.80" height="14.00" fill="#e4e1de" /><rect x="308.50" y="499.50" width="0.80" height="14.00" fill="#e4e1de" /><rect x="383.90" y="499.50" width="0.80" height="14.00" fill="#e4e1de" /><rect x="453.30" y="499.50" width="0.80" height="14.00" fill="#e4e1de" /><rect x="687.00" y="502.40" width="300.40" height="9.00" rx="4.5" fill="#f5f5f5" /><rect x="695.70" y="504.00" width="269.60" height="5.50" rx="2.75" fill="#6f6f6f" /><rect x="806.00" y="517.40" width="26.00" height="13.60" fill="#d6d6d6" /><path d="M990.8 83.4L994 79.6L997.2 83.4Z" fill="#6a6a6a"/><path d="M990.8 490.6L994 494.4L997.2 490.6Z" fill="#6a6a6a"/><path d="M692.4 504L688.8 506.8L692.4 509.6Z" fill="#5a5a5a"/><path d="M980.8 504L984.6 506.8L980.8 509.6Z" fill="#5a5a5a"/><rect x="673.8" y="503.8" width="1.1" height="1.1" fill="#555"/><rect x="673.8" y="506.2" width="1.1" height="1.1" fill="#555"/><rect x="673.8" y="508.6" width="1.1" height="1.1" fill="#555"/><path d="M19.6 503.4L16.8 506.4L19.6 509.4" stroke="#b0b0b0" stroke-width="0.8"/><path d="M38 503.4L40.8 506.4L38 509.4" stroke="#b0b0b0" stroke-width="0.8"/><path d="M480.6 506.5H488M484.3 502.8V510.2" stroke="#2a2a2a" stroke-width="0.75"/><rect x="39.9" y="520.3" width="8.8" height="8.3" rx="0.8" stroke="#444" stroke-width="0.9" fill="#e4e4e4"/><rect x="39.9" y="520.3" width="8.8" height="2.4" fill="#4a4a4a"/><circle cx="45.6" cy="526" r="2" stroke="#3a3a3a" stroke-width="0.8" fill="#f3f3f3"/><circle cx="45.6" cy="526" r="0.8" fill="#3a3a3a"/><circle cx="65.6" cy="521.6" r="1.3" stroke="#3a3a3a" stroke-width="0.8"/><path d="M61.6 524H69.6M65.6 524V526.6L63.2 529.8M65.6 526.6L68 529.8" stroke="#3a3a3a" stroke-width="0.85"/><path d="M60.4 521.2L61.6 522.4L63.4 520" stroke="#3a3a3a" stroke-width="0.7"/><rect x="814.6" y="520.2" width="8.6" height="8.2" stroke="#444" stroke-width="0.8"/><path d="M817.5 520.2V528.4M820.4 520.2V528.4M814.6 523H823.2M814.6 525.7H823.2" stroke="#444" stroke-width="0.7"/><rect x="841" y="520.2" width="8.6" height="8.2" stroke="#444" stroke-width="0.8"/><rect x="842.6" y="521.8" width="5.4" height="5" stroke="#555" stroke-width="0.7" fill="#a8a8a8"/><rect x="867" y="520.2" width="8.6" height="8.2" stroke="#444" stroke-width="0.8"/><path d="M869.8 520.2V525H873V520.2" stroke="#444" stroke-width="0.7"/><path d="M888.6 524.4H892.6" stroke="#444" stroke-width="0.8"/><path d="M895.5 524.4H961" stroke="#c6c6c6" stroke-width="1.1"/><rect x="928" y="520.6" width="2.8" height="7.4" rx="0.5" fill="#505050"/><path d="M964.6 524.4H969M966.8 522.2V526.6" stroke="#444" stroke-width="0.8"/></svg>
<span class="t" style="left:51.60px;top:78.08px;line-height:10.44px;font-size:8.7px;font-weight:400;color:#3a3a3a;">A</span>
<span class="t" style="left:125.10px;top:78.08px;line-height:10.44px;font-size:8.7px;font-weight:400;color:#3a3a3a;">B</span>
<span class="t" style="left:182.23px;top:78.08px;line-height:10.44px;font-size:8.7px;font-weight:400;color:#3a3a3a;">C</span>
<span class="t" style="left:245.61px;top:78.08px;line-height:10.44px;font-size:8.7px;font-weight:400;color:#3a3a3a;">D</span>
<span class="t" style="left:325.85px;top:78.08px;line-height:10.44px;font-size:8.7px;font-weight:400;color:#3a3a3a;">E</span>
<span class="t" style="left:384.22px;top:78.08px;line-height:10.44px;font-size:8.7px;font-weight:400;color:#3a3a3a;">F</span>
<span class="t" style="left:440.37px;top:78.08px;line-height:10.44px;font-size:8.7px;font-weight:400;color:#3a3a3a;">G</span>
<span class="t" style="left:513.73px;top:78.08px;line-height:10.44px;font-size:8.7px;font-weight:400;color:#1f7244;">H</span>
<span class="t" style="left:581.06px;top:78.08px;line-height:10.44px;font-size:8.7px;font-weight:400;color:#3a3a3a;">I</span>
<span class="t" style="left:629.48px;top:78.08px;line-height:10.44px;font-size:8.7px;font-weight:400;color:#3a3a3a;">J</span>
<span class="t" style="left:670.48px;top:78.08px;line-height:10.44px;font-size:8.7px;font-weight:400;color:#3a3a3a;">K</span>
<span class="t" style="left:712.70px;top:78.08px;line-height:10.44px;font-size:8.7px;font-weight:400;color:#3a3a3a;">L</span>
<span class="t" style="left:753.12px;top:78.08px;line-height:10.44px;font-size:8.7px;font-weight:400;color:#3a3a3a;">M</span>
<span class="t" style="left:795.36px;top:78.08px;line-height:10.44px;font-size:8.7px;font-weight:400;color:#3a3a3a;">N</span>
<span class="t" style="left:836.99px;top:78.08px;line-height:10.44px;font-size:8.7px;font-weight:400;color:#3a3a3a;">O</span>
<span class="t" style="left:879.23px;top:78.08px;line-height:10.44px;font-size:8.7px;font-weight:400;color:#3a3a3a;">P</span>
<span class="t" style="left:920.37px;top:78.08px;line-height:10.44px;font-size:8.7px;font-weight:400;color:#3a3a3a;">Q</span>
<span class="t" style="left:962.23px;top:78.08px;line-height:10.44px;font-size:8.7px;font-weight:400;color:#3a3a3a;">R</span>
<span class="t" style="left:47.28px;top:115.09px;line-height:10.32px;font-size:8.6px;font-weight:700;color:#000;transform:scaleX(0.9450);">title</span>
<span class="t" style="left:94.80px;top:115.09px;line-height:10.32px;font-size:8.6px;font-weight:700;color:#000;transform:scaleX(0.9349);">Average of salary</span>
<span class="t" style="left:113.88px;top:127.59px;line-height:10.32px;font-size:8.6px;font-weight:400;color:#1a1a1a;transform:scaleX(0.9850);">#DIV/0!</span>
<span class="t" style="left:20.11px;top:140.09px;line-height:10.32px;font-size:8.6px;font-weight:400;color:#1a1a1a;transform:scaleX(0.9600);">Assistant Engineer</span>
<span class="t" style="left:116.23px;top:140.09px;line-height:10.32px;font-size:8.6px;font-weight:400;color:#1a1a1a;transform:scaleX(0.9850);">52668</span>
<span class="t" style="left:37.98px;top:152.59px;line-height:10.32px;font-size:8.6px;font-weight:400;color:#1a1a1a;transform:scaleX(0.9600);">Engineer</span>
<span class="t" style="left:113.88px;top:152.59px;line-height:10.32px;font-size:8.6px;font-weight:400;color:#1a1a1a;transform:scaleX(0.9850);">#DIV/0!</span>
<span class="t" style="left:24.91px;top:165.09px;line-height:10.32px;font-size:8.6px;font-weight:400;color:#1a1a1a;transform:scaleX(0.9600);">Senior Engineer</span>
<span class="t" style="left:112.69px;top:165.09px;line-height:10.32px;font-size:8.6px;font-weight:400;color:#1a1a1a;transform:scaleX(0.9850);">69717.6</span>
<span class="t" style="left:33.02px;top:177.59px;line-height:10.32px;font-size:8.6px;font-weight:400;color:#1a1a1a;transform:scaleX(0.9600);">Senior Staff</span>
<span class="t" style="left:116.23px;top:177.59px;line-height:10.32px;font-size:8.6px;font-weight:400;color:#1a1a1a;transform:scaleX(0.9850);">91381</span>
<span class="t" style="left:46.09px;top:190.09px;line-height:10.32px;font-size:8.6px;font-weight:400;color:#1a1a1a;transform:scaleX(0.9600);">Staff</span>
<span class="t" style="left:116.23px;top:190.09px;line-height:10.32px;font-size:8.6px;font-weight:400;color:#1a1a1a;transform:scaleX(0.9850);">72527</span>
<span class="t" style="left:21.70px;top:202.59px;line-height:10.32px;font-size:8.6px;font-weight:400;color:#1a1a1a;transform:scaleX(0.9600);">Technique Leader</span>
<span class="t" style="left:113.88px;top:202.59px;line-height:10.32px;font-size:8.6px;font-weight:400;color:#1a1a1a;transform:scaleX(0.9850);">#DIV/0!</span>
<span class="t" style="left:32.01px;top:215.09px;line-height:10.32px;font-size:8.6px;font-weight:700;color:#000;transform:scaleX(0.9450);">Grand Total</span>
<span class="t" style="left:103.28px;top:215.09px;line-height:10.32px;font-size:8.6px;font-weight:700;color:#000;transform:scaleX(0.9850);">72949.44444</span>
<span class="t" style="left:225.90px;top:115.09px;line-height:10.32px;font-size:8.6px;font-weight:700;color:#000;transform:scaleX(0.9915);">departmant</span>
<span class="t" style="left:294.70px;top:115.09px;line-height:10.32px;font-size:8.6px;font-weight:700;color:#000;transform:scaleX(0.9751);">Count of emp_no</span>
<span class="t" style="left:215.97px;top:127.59px;line-height:10.32px;font-size:8.6px;font-weight:400;color:#1a1a1a;transform:scaleX(0.9600);">Customer Service</span>
<span class="t" style="left:326.40px;top:127.59px;line-height:10.32px;font-size:8.6px;font-weight:400;color:#1a1a1a;transform:scaleX(0.9850);">3</span>
<span class="t" style="left:224.44px;top:140.09px;line-height:10.32px;font-size:8.6px;font-weight:400;color:#1a1a1a;transform:scaleX(0.9600);">Development</span>
<span class="t" style="left:324.04px;top:140.09px;line-height:10.32px;font-size:8.6px;font-weight:400;color:#1a1a1a;transform:scaleX(0.9850);">30</span>
<span class="t" style="left:234.07px;top:152.59px;line-height:10.32px;font-size:8.6px;font-weight:400;color:#1a1a1a;transform:scaleX(0.9600);">Finance</span>
<span class="t" style="left:326.40px;top:152.59px;line-height:10.32px;font-size:8.6px;font-weight:400;color:#1a1a1a;transform:scaleX(0.9850);">4</span>
<span class="t" style="left:214.59px;top:165.09px;line-height:10.32px;font-size:8.6px;font-weight:400;color:#1a1a1a;transform:scaleX(0.9600);">Human Resources</span>
<span class="t" style="left:326.40px;top:165.09px;line-height:10.32px;font-size:8.6px;font-weight:400;color:#1a1a1a;transform:scaleX(0.9850);">8</span>
<span class="t" style="left:230.64px;top:177.59px;line-height:10.32px;font-size:8.6px;font-weight:400;color:#1a1a1a;transform:scaleX(0.9600);">Marketing</span>
<span class="t" style="left:326.40px;top:177.59px;line-height:10.32px;font-size:8.6px;font-weight:400;color:#1a1a1a;transform:scaleX(0.9850);">3</span>
<span class="t" style="left:229.03px;top:190.09px;line-height:10.32px;font-size:8.6px;font-weight:400;color:#1a1a1a;transform:scaleX(0.9600);">Production</span>
<span class="t" style="left:324.04px;top:190.09px;line-height:10.32px;font-size:8.6px;font-weight:400;color:#1a1a1a;transform:scaleX(0.9850);">21</span>
<span class="t" style="left:208.90px;top:202.59px;line-height:10.32px;font-size:8.6px;font-weight:400;color:#1a1a1a;">Quality Management</span>
<span class="t" style="left:326.40px;top:202.59px;line-height:10.32px;font-size:8.6px;font-weight:400;color:#1a1a1a;transform:scaleX(0.9850);">4</span>
<span class="t" style="left:231.09px;top:215.09px;line-height:10.32px;font-size:8.6px;font-weight:400;color:#1a1a1a;transform:scaleX(0.9600);">Research</span>
<span class="t" style="left:326.40px;top:215.09px;line-height:10.32px;font-size:8.6px;font-weight:400;color:#1a1a1a;transform:scaleX(0.9850);">7</span>
<span class="t" style="left:238.43px;top:227.59px;line-height:10.32px;font-size:8.6px;font-weight:400;color:#1a1a1a;transform:scaleX(0.9600);">Sales</span>
<span class="t" style="left:324.36px;top:227.59px;line-height:10.32px;font-size:8.6px;font-weight:400;color:#1a1a1a;transform:scaleX(0.9850);">11</span>
<span class="t" style="left:236.13px;top:240.09px;line-height:10.32px;font-size:8.6px;font-weight:400;color:#1a1a1a;transform:scaleX(0.9600);">(blank)</span>
<span class="t" style="left:326.40px;top:240.09px;line-height:10.32px;font-size:8.6px;font-weight:400;color:#1a1a1a;transform:scaleX(0.9850);">9</span>
<span class="t" style="left:226.26px;top:252.59px;line-height:10.32px;font-size:8.6px;font-weight:700;color:#000;transform:scaleX(0.9450);">Grand Total</span>
<span class="t" style="left:321.69px;top:252.59px;line-height:10.32px;font-size:8.6px;font-weight:700;color:#000;transform:scaleX(0.9850);">100</span>
<span class="t" style="left:420.50px;top:115.09px;line-height:10.32px;font-size:8.6px;font-weight:700;color:#000;transform:scaleX(0.9937);">departmant</span>
<span class="t" style="left:483.10px;top:115.09px;line-height:10.32px;font-size:8.6px;font-weight:700;color:#000;transform:scaleX(0.9433);">Average of salary</span>
<span class="t" style="left:441.23px;top:127.59px;line-height:10.32px;font-size:8.6px;font-weight:400;color:#1a1a1a;transform:scaleX(0.9600);">F</span>
<span class="t" style="left:499.22px;top:127.59px;line-height:10.32px;font-size:8.6px;font-weight:400;color:#1a1a1a;transform:scaleX(0.9850);">75714.75</span>
<span class="t" style="left:440.31px;top:140.09px;line-height:10.32px;font-size:8.6px;font-weight:400;color:#1a1a1a;transform:scaleX(0.9600);">M</span>
<span class="t" style="left:501.57px;top:140.09px;line-height:10.32px;font-size:8.6px;font-weight:400;color:#1a1a1a;transform:scaleX(0.9850);">70737.2</span>
<span class="t" style="left:421.26px;top:152.59px;line-height:10.32px;font-size:8.6px;font-weight:700;color:#000;transform:scaleX(0.9450);">Grand Total</span>
<span class="t" style="left:492.16px;top:152.59px;line-height:10.32px;font-size:8.6px;font-weight:700;color:#000;transform:scaleX(0.9850);">72949.44444</span>
<span class="t" style="left:409.50px;top:302.59px;line-height:10.32px;font-size:8.6px;font-weight:400;color:#1a1a1a;transform:scaleX(0.9931);">password: 12345</span>
<span class="t" style="left:13.80px;top:36.72px;line-height:10.56px;font-size:8.8px;font-weight:400;color:#333333;transform:scaleX(0.8740);">File</span>
<span class="t" style="left:44.80px;top:36.72px;line-height:10.56px;font-size:8.8px;font-weight:400;color:#333333;transform:scaleX(0.9800);">Home</span>
<span class="t" style="left:80.60px;top:36.72px;line-height:10.56px;font-size:8.8px;font-weight:400;color:#333333;transform:scaleX(1.0175);">Insert</span>
<span class="t" style="left:116.50px;top:36.72px;line-height:10.56px;font-size:8.8px;font-weight:400;color:#333333;transform:scaleX(0.9655);">Page Layout</span>
<span class="t" style="left:178.60px;top:36.72px;line-height:10.56px;font-size:8.8px;font-weight:400;color:#333333;transform:scaleX(0.9599);">Formulas</span>
<span class="t" style="left:226.90px;top:36.72px;line-height:10.56px;font-size:8.8px;font-weight:400;color:#333333;transform:scaleX(0.9788);">Data</span>
<span class="t" style="left:259.20px;top:36.72px;line-height:10.56px;font-size:8.8px;font-weight:400;color:#333333;transform:scaleX(0.9222);">Review</span>
<span class="t" style="left:299.80px;top:36.72px;line-height:10.56px;font-size:8.8px;font-weight:400;color:#333333;transform:scaleX(0.9777);">View</span>
<span class="t" style="left:331.00px;top:36.72px;line-height:10.56px;font-size:8.8px;font-weight:400;color:#333333;transform:scaleX(1.0383);">Automate</span>
<span class="t" style="left:383.80px;top:36.72px;line-height:10.56px;font-size:8.8px;font-weight:400;color:#333333;transform:scaleX(0.9823);">Developer</span>
<span class="t" style="left:436.60px;top:36.72px;line-height:10.56px;font-size:8.8px;font-weight:400;color:#333333;transform:scaleX(1.0192);">Add-ins</span>
<span class="t" style="left:480.20px;top:36.72px;line-height:10.56px;font-size:8.8px;font-weight:400;color:#333333;transform:scaleX(0.9727);">Help</span>
<span class="t" style="left:511.20px;top:36.72px;line-height:10.56px;font-size:8.8px;font-weight:400;color:#333333;">Acrobat</span>
<span class="t" style="left:555.40px;top:36.72px;line-height:10.56px;font-size:8.8px;font-weight:400;color:#333333;transform:scaleX(0.9736);">Power Pivot</span>
<span class="t" style="left:141.50px;top:10.66px;line-height:10.08px;font-size:8.4px;font-weight:400;color:#ffffff;transform:scaleX(0.8217);">Task 4</span>
<span class="t" style="left:164.30px;top:10.66px;line-height:10.08px;font-size:8.4px;font-weight:400;color:#ffffff;transform:scaleX(1.0894);">•</span>
<span class="t" style="left:171.80px;top:10.66px;line-height:10.08px;font-size:8.4px;font-weight:400;color:#ffffff;transform:scaleX(0.8783);">Saved to this PC</span>
<span class="t" style="left:413.00px;top:10.68px;line-height:9.84px;font-size:8.2px;font-weight:400;color:#3a7456;transform:scaleX(1.0211);">Search</span>
<span class="t" style="left:892.80px;top:36.16px;line-height:10.08px;font-size:8.4px;font-weight:400;color:#333;transform:scaleX(1.0667);">Comments</span>
<span class="t" style="left:959.80px;top:36.16px;line-height:10.08px;font-size:8.4px;font-weight:400;color:#fff;transform:scaleX(0.9705);">Share</span>
<span class="t" style="left:9.30px;top:60.00px;line-height:9.60px;font-size:8.0px;font-weight:400;color:#222;">H15</span>
<span class="t" style="left:119.60px;top:56.70px;line-height:13.80px;font-size:11.5px;font-weight:400;color:#333;font-style:italic;font-family:'Liberation Serif', serif;transform:scaleX(1.0827);">fx</span>
<span class="t" style="left:33.60px;top:275.04px;line-height:10.32px;font-size:8.6px;font-weight:700;color:#111;transform:scaleX(0.9423);">title</span>
<span class="t" style="left:233.60px;top:275.04px;line-height:10.32px;font-size:8.6px;font-weight:700;color:#111;transform:scaleX(0.9942);">department_name</span>
<span class="t" style="left:414.40px;top:185.74px;line-height:10.32px;font-size:8.6px;font-weight:700;color:#111;transform:scaleX(0.9597);">gender</span>
<span class="t" style="left:78.90px;top:499.96px;line-height:11.28px;font-size:9.4px;font-weight:700;color:#262626;transform:scaleX(0.9372);">pivot</span>
<span class="t" style="left:117.00px;top:501.46px;line-height:11.28px;font-size:9.4px;font-weight:400;color:#3a3a3a;transform:scaleX(0.9527);">employees</span>
<span class="t" style="left:177.40px;top:501.46px;line-height:11.28px;font-size:9.4px;font-weight:400;color:#3a3a3a;transform:scaleX(0.9750);">titles</span>
<span class="t" style="left:213.80px;top:501.46px;line-height:11.28px;font-size:9.4px;font-weight:400;color:#3a3a3a;transform:scaleX(0.9783);">dept_emp</span>
<span class="t" style="left:271.00px;top:501.46px;line-height:11.28px;font-size:9.4px;font-weight:400;color:#3a3a3a;transform:scaleX(0.9099);">salaries</span>
<span class="t" style="left:317.80px;top:501.46px;line-height:11.28px;font-size:9.4px;font-weight:400;color:#3a3a3a;transform:scaleX(0.9592);">dept_manager</span>
<span class="t" style="left:393.00px;top:501.46px;line-height:11.28px;font-size:9.4px;font-weight:400;color:#3a3a3a;transform:scaleX(0.9861);">departments</span>
<span class="t" style="left:7.50px;top:521.20px;line-height:8.40px;font-size:7.0px;font-weight:400;color:#444;transform:scaleX(0.9143);">Ready</span>
<span class="t" style="left:72.20px;top:521.26px;line-height:8.28px;font-size:6.9px;font-weight:700;color:#222;transform:scaleX(0.9570);">Accessibility: Investigate</span>
<span class="t" style="left:978.00px;top:521.20px;line-height:8.40px;font-size:7.0px;font-weight:400;color:#444;transform:scaleX(0.9271);">100%</span>
</div>
</body></html>
